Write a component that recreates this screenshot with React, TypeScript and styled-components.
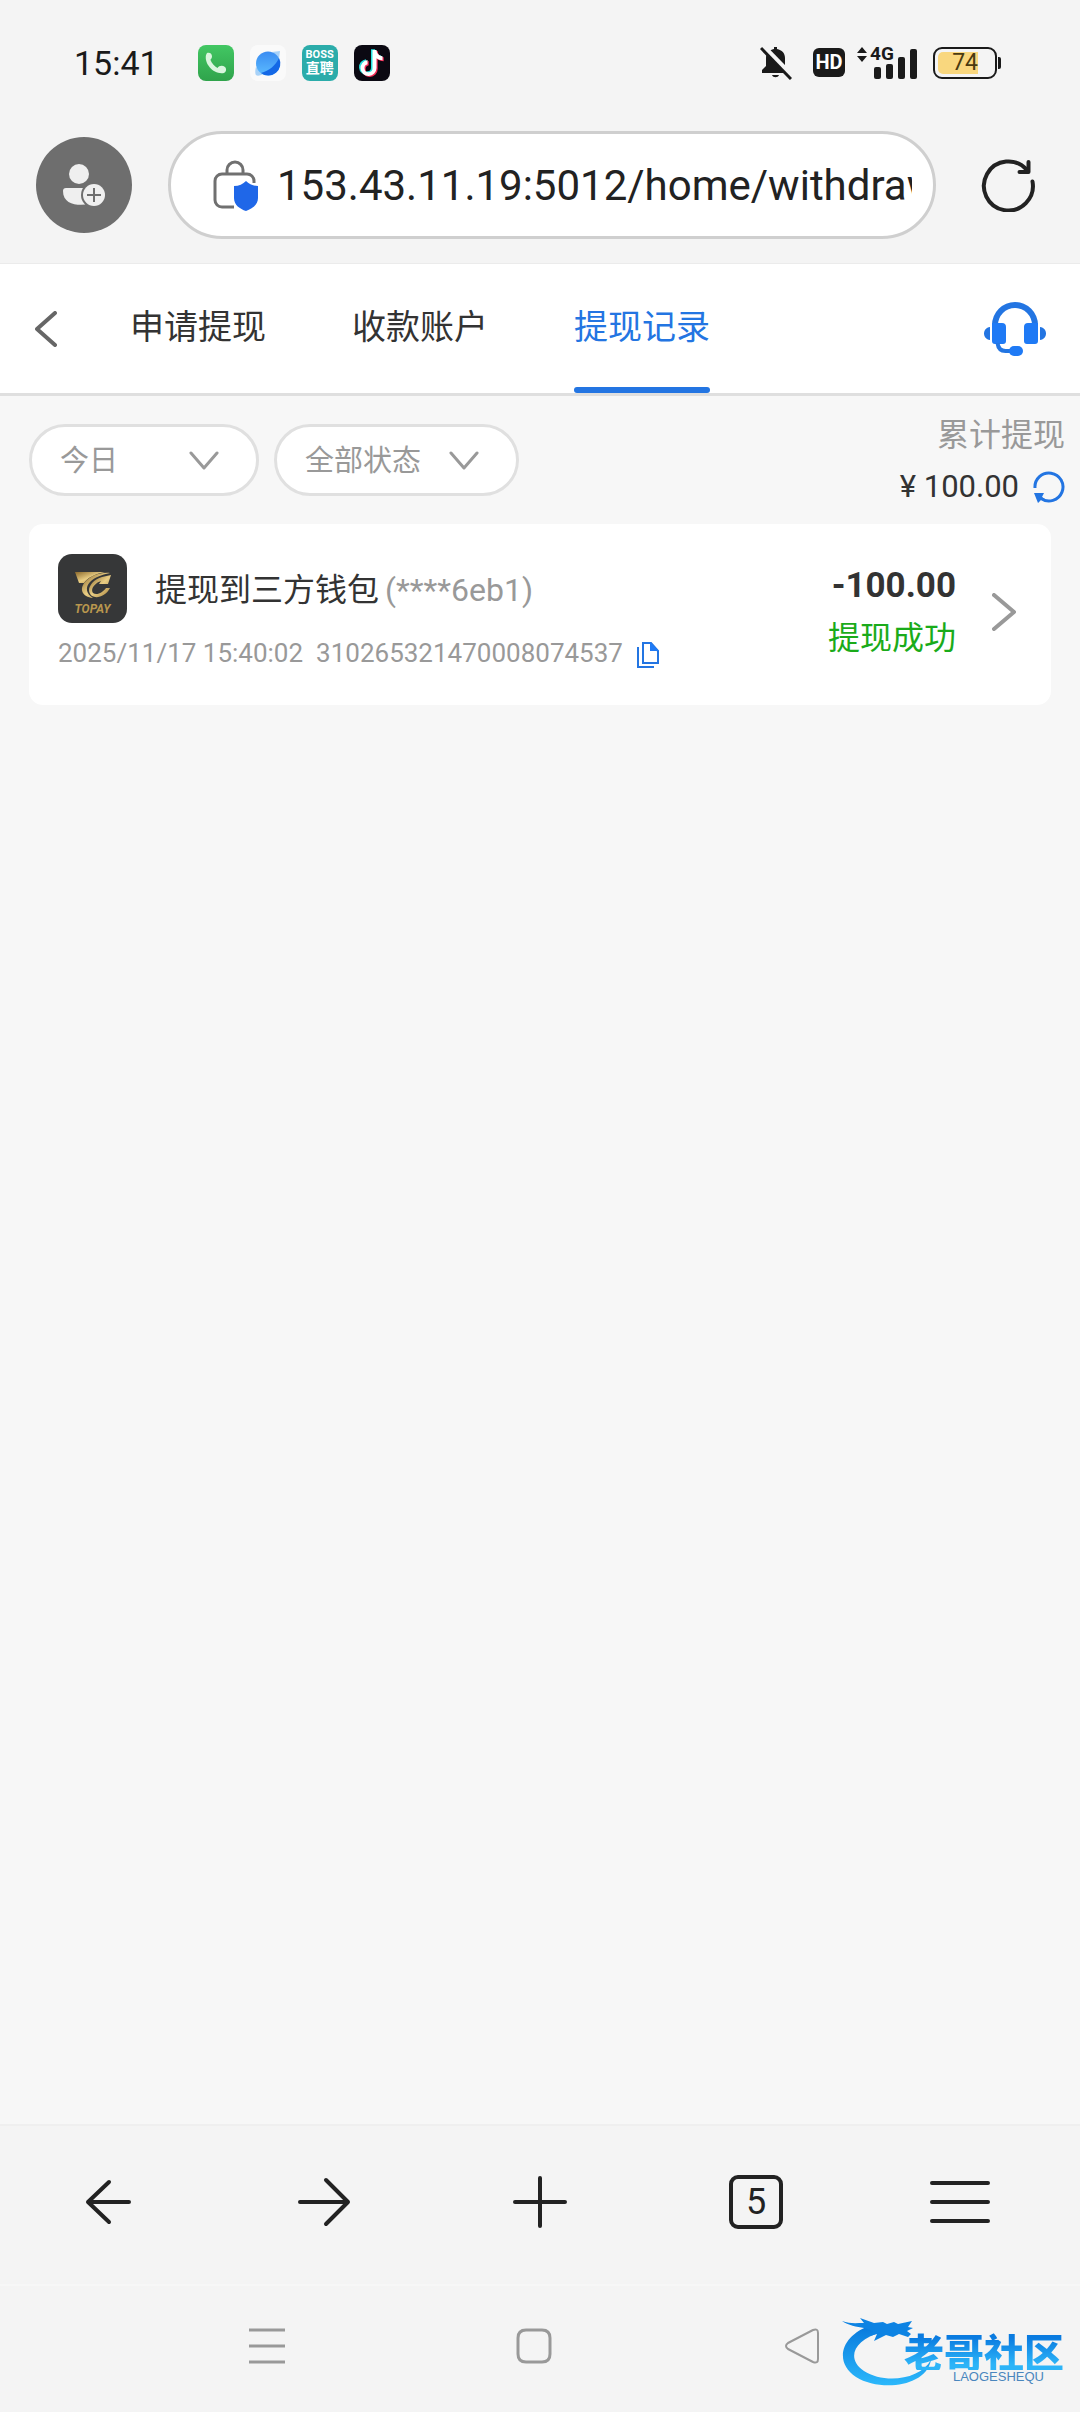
import React from 'react';
import styled, { createGlobalStyle } from 'styled-components';

const GlobalStyle = createGlobalStyle`
  * { box-sizing: border-box; }
  body { margin: 0; background: #f7f7f7; }
  body, button, input, select { font-family: Roboto, "Noto Sans CJK SC", sans-serif; }
  button { border: 0; padding: 0; background: none; color: inherit; cursor: pointer; }
  svg { display: block; flex: none; }
`;

const Screen = styled.div`
  display: flex;
  flex-direction: column;
  min-height: 100vh;
  color: #333;
`;

/* ---------- system status bar ---------- */
const StatusBar = styled.div`
  display: flex;
  align-items: center;
  justify-content: space-between;
  height: 125px;
  padding: 0 79px 0 74px;
  background: #f4f4f4;
  color: #1a1a1a;
`;
const StatusGroup = styled.div<{ $gap: number }>`
  display: flex;
  align-items: center;
  gap: ${(p) => p.$gap}px;
`;
const Clock = styled.span`
  margin-right: 23px;
  font-size: 34px;
  line-height: 40px;
`;
const BossIcon = styled.span`
  display: flex;
  flex-direction: column;
  align-items: center;
  justify-content: center;
  width: 36px;
  height: 36px;
  border-radius: 8px;
  background: #2bacaa;
  color: #fff;
  font-weight: 700;
  font-size: 14px;
  line-height: 15px;
`;
const BossWord = styled.span`
  font-size: 11px;
  line-height: 12px;
`;
const HdBadge = styled.span`
  width: 32px;
  margin-left: 9px;
  border-radius: 6px;
  background: #1a1a1a;
  color: #fff;
  font-size: 20px;
  font-weight: 700;
  line-height: 29px;
  text-align: center;
`;
const Signal = styled.span`
  position: relative;
  width: 60px;
  height: 34px;
`;
const NetType = styled.span`
  position: absolute;
  left: 13px;
  top: 0;
  font-size: 19px;
  font-weight: 700;
  line-height: 16px;
`;
const BatteryWrap = styled.span`
  display: flex;
  align-items: center;
  gap: 1px;
  margin-left: 4px;
`;
const Battery = styled.span`
  width: 64px;
  height: 32px;
  padding: 3px;
  border: 2px solid #1a1a1a;
  border-radius: 9px;
`;
const BatteryLevel = styled.span`
  display: block;
  width: 40px;
  border-radius: 5px 0 0 5px;
  background: #f9d77e;
  color: #4a3a10;
  font-size: 23px;
  line-height: 22px;
  text-align: right;
`;
const BatteryTip = styled.span`
  width: 3px;
  height: 12px;
  border-radius: 0 2px 2px 0;
  background: #1a1a1a;
`;

/* ---------- browser address bar ---------- */
const AddressRow = styled.header`
  display: flex;
  align-items: center;
  height: 139px;
  padding: 0 45px 18px 36px;
  border-bottom: 1px solid #ebebeb;
  background: #f4f4f4;
`;
const Avatar = styled.button`
  display: grid;
  place-items: center;
  width: 96px;
  height: 96px;
  border-radius: 50%;
  background: #6e6e6e;
`;
const AddressBox = styled.label`
  display: flex;
  flex: 1;
  align-items: center;
  gap: 18px;
  min-width: 0;
  height: 108px;
  margin: 0 45px 0 36px;
  padding: 2px 21px 0 42px;
  border: 3px solid #cfcfcf;
  border-radius: 54px;
  background: #fff;
`;
const AddressInput = styled.input`
  flex: 1;
  min-width: 0;
  padding: 0;
  border: 0;
  outline: 0;
  background: none;
  color: #222;
  font-size: 42px;
  line-height: 50px;
`;

/* ---------- page header ---------- */
const PageHeader = styled.nav`
  display: flex;
  align-items: center;
  height: 132px;
  padding: 0 34px 0 35px;
  border-bottom: 3px solid #dfdfdf;
  background: #fff;
`;
const Tabs = styled.div`
  display: flex;
  flex: 1;
  gap: 86px;
  height: 100%;
  padding-left: 73px;
`;
const Tab = styled.button<{ $active?: boolean }>`
  position: relative;
  height: 100%;
  padding-bottom: 4px;
  color: ${(p) => (p.$active ? '#2375e2' : '#333')};
  font-size: 34px;
  line-height: 50px;

  &::after {
    content: "";
    position: absolute;
    left: 0;
    right: 0;
    bottom: 0;
    height: 6px;
    border-radius: 3px;
    background: ${(p) => (p.$active ? '#2375e2' : 'transparent')};
  }
`;

/* ---------- filters and total ---------- */
const Content = styled.main`
  flex: 1;
  background: #f7f7f7;
`;
const FilterRow = styled.div`
  display: flex;
  align-items: center;
  gap: 15px;
  height: 128px;
  padding: 0 15px 0 29px;
`;
const Picker = styled.span<{ $width: number }>`
  position: relative;
  width: ${(p) => p.$width}px;
  svg {
    position: absolute;
    right: 40px;
    top: 27px;
    pointer-events: none;
  }
`;
const PickerSelect = styled.select`
  appearance: none;
  display: block;
  width: 100%;
  height: 72px;
  padding: 2px 28px 0;
  border: 3px solid #e0e0e0;
  border-radius: 36px;
  background: #fff;
  color: #999;
  font-size: 29px;
`;
const Total = styled.div`
  display: flex;
  flex-direction: column;
  align-items: flex-end;
  margin-left: auto;
  padding-top: 2px;
  color: #999;
  font-size: 32px;
  line-height: 52px;
`;
const TotalValue = styled.span`
  display: flex;
  align-items: center;
  gap: 14px;
  color: #333;
  font-size: 31px;
`;

/* ---------- record card ---------- */
const Card = styled.article`
  display: flex;
  align-items: center;
  margin: 0 29px;
  padding: 30px 35px 35px 29px;
  border-radius: 14px;
  background: #fff;
`;
const Details = styled.div`
  display: flex;
  flex: 1;
  flex-direction: column;
  gap: 13px;
`;
const TitleRow = styled.div`
  display: flex;
  align-items: center;
  height: 69px;
  color: #333;
  font-size: 32px;
  line-height: 40px;
`;
const TitleText = styled.span`
  padding-top: 3px;
`;
const WalletLogo = styled.span`
  display: flex;
  flex-direction: column;
  align-items: center;
  gap: 4px;
  width: 69px;
  height: 69px;
  margin-right: 28px;
  padding-top: 18px;
  border-radius: 14px;
  background: #363738;
  color: #b8964e;
  font-size: 12px;
  font-style: italic;
  font-weight: 700;
  line-height: 14px;
`;
const Muted = styled.span`
  margin-left: 6px;
  color: #999;
`;
const MetaRow = styled.div`
  display: flex;
  align-items: center;
  gap: 13px;
  color: #999;
  font-size: 26px;
  line-height: 34px;
`;
const CopyButton = styled.button`
  padding-top: 3px;
`;
const Result = styled.div`
  display: flex;
  flex-direction: column;
  align-items: flex-end;
  margin-right: 36px;
  color: #1aab1a;
  font-size: 32px;
  line-height: 52px;
`;
const Amount = styled.strong`
  color: #333;
  font-size: 35px;
  font-weight: 700;
`;

/* ---------- bottom bars ---------- */
const Toolbar = styled.footer`
  display: grid;
  grid-template-columns: repeat(5, 1fr);
  height: 160px;
  padding-bottom: 6px;
  border-top: 2px solid #efefef;
  background: #f4f4f4;
`;
const ToolButton = styled.button<{ $inset?: number }>`
  display: grid;
  place-items: center;
  padding-right: ${(p) => p.$inset ?? 0}px;
`;
const TabCount = styled.span`
  width: 54px;
  height: 54px;
  border: 4px solid #222;
  border-radius: 9px;
  color: #222;
  font-size: 36px;
  line-height: 46px;
`;
const SystemNav = styled.div`
  position: relative;
  display: grid;
  grid-template-columns: repeat(3, 1fr);
  height: 128px;
  padding: 0 144px 6px 133px;
  border-top: 2px solid #f7f7f7;
  background: #f4f4f4;
`;
const Watermark = styled.div`
  position: absolute;
  right: 16px;
  top: 32px;
  display: flex;
  width: 222px;
  flex-direction: column;
  align-items: flex-end;
  padding-top: 14px;
  svg {
    position: absolute;
    left: 0;
    top: 0;
  }
`;
const WatermarkTitle = styled.span`
  position: relative;
  background: linear-gradient(#0a7be0 15%, #2cb4f8 85%);
  background-clip: text;
  -webkit-background-clip: text;
  color: transparent;
  font-family: "Noto Sans CJK SC", sans-serif;
  font-size: 40px;
  font-weight: 900;
  line-height: 38px;
`;
const WatermarkSub = styled.span`
  position: relative;
  margin-right: 20px;
  color: #4a86bd;
  font-family: "Liberation Sans", sans-serif;
  font-size: 13px;
  line-height: 14px;
`;

const PhoneIcon = () => (
  <svg width="36" height="36" viewBox="0 0 36 36">
    <defs>
      <linearGradient id="phone" x2="0" y2="1">
        <stop stopColor="#42c763" />
        <stop offset="1" stopColor="#2fa34b" />
      </linearGradient>
    </defs>
    <rect width="36" height="36" rx="8" fill="url(#phone)" />
    <path d="M9 8c3-1 5 1 5 3.500 0 2-1.500 2.500-1.500 3.500 1 3 4 6.500 7 8 1.500-2.500 5-3 7.500-1 2 2 1 5-1 6C16 30 6 19 8 10z" fill="#d9f5de" />
  </svg>
);

const PlanetIcon = () => (
  <svg width="36" height="36" viewBox="0 0 36 36">
    <defs>
      <linearGradient id="planet" x2="0" y2="1">
        <stop stopColor="#3a8cf2" />
        <stop offset="1" stopColor="#5cbcff" />
      </linearGradient>
    </defs>
    <rect width="36" height="36" rx="8" fill="#fafafa" />
    <path d="M22 7l8-1-1 8zM6 22l7 7c-3 2-6 2-7 1s-1-5 0-8z" fill="#a8d2f8" />
    <circle cx="18" cy="18.500" r="12" fill="url(#planet)" />
    <path d="M29 13a12 12 0 0 1-18 15c8-2 15-8 18-15z" fill="#1468e6" />
  </svg>
);

const TikTokIcon = () => {
  const note = 'M18.500 5h4c.5 4 3 6 6 6.300v4c-2.500 0-4.500-.8-6-2V23a8 8 0 1 1-9-8v4.300a4 4 0 1 0 5 3.700z';
  return (
    <svg width="36" height="36" viewBox="0 0 36 36">
      <rect width="36" height="36" rx="8" fill="#0b0912" />
      <path d={note} fill="#29e0df" transform="translate(-1.500 -.8)" />
      <path d={note} fill="#f62d58" transform="translate(1.200 1)" />
      <path d={note} fill="#fff" />
    </svg>
  );
};

const MutedBellIcon = () => (
  <svg width="32" height="34" viewBox="0 0 32 34">
    <path d="M14 1h3v2c5 1 8 4 8 9v8l4 5v2H2v-3l4-4v-8c0-5 3-8 8-9zM12 29h7c-1 3-6 3-7 0z" fill="#1a1a1a" />
    <path d="M3 0l30 31" stroke="#f4f4f4" strokeWidth="5" />
    <path d="M1 2l30 31" stroke="#1a1a1a" strokeWidth="3" />
  </svg>
);

const SignalBars = () => (
  <svg width="60" height="34" viewBox="0 0 60 34">
    <path d="M0 7l5-6 5 6zM0 10l5 6 5-6z" fill="#1a1a1a" />
    <g fill="#1a1a1a">
      <rect x="17" y="21" width="7" height="12" rx="2" />
      <rect x="29" y="18" width="7" height="15" rx="2" />
      <rect x="41" y="11" width="7" height="22" rx="2" />
      <rect x="53" y="3" width="7" height="30" rx="2" />
    </g>
  </svg>
);

const AddUserIcon = () => (
  <svg width="42" height="44" viewBox="0 0 42 44">
    <g fill="#efefef">
      <circle cx="16" cy="11" r="10" />
      <path d="M3 25h24v16c-12 2-27 1-27-13a3 3 0 0 1 3-3z" />
    </g>
    <circle cx="31" cy="32" r="13" fill="#6e6e6e" />
    <circle cx="31" cy="32" r="11" fill="#efefef" />
    <path d="M31 25v14M24 32h14" stroke="#6e6e6e" strokeWidth="2" />
  </svg>
);

const SecureIcon = () => (
  <svg width="46" height="52" viewBox="0 0 46 52">
    <g fill="none" stroke="#707070" strokeWidth="3">
      <path d="M14 14V10a8 8 0 0 1 16 0v4" />
      <path d="M21 47H9a7 7 0 0 1-7-7V21a7 7 0 0 1 7-7h25a7 7 0 0 1 7 7v2" />
    </g>
    <path d="M33 21c3 3 7 5 12 5v12c0 7-6 11-12 13-6-2-12-6-12-13V26c5 0 9-2 12-5z" fill="#1f67e8" />
  </svg>
);

const ReloadIcon = () => (
  <svg width="54" height="54" viewBox="0 0 54 54" fill="none" stroke="#222" strokeWidth="4" strokeLinecap="round" strokeLinejoin="round">
    <path d="M51.500 23.500A24.500 24.500 0 1 1 46 12" />
    <path d="M47.500 4v10h-9" />
  </svg>
);

const HeadsetIcon = () => (
  <svg width="62" height="56" viewBox="0 0 62 56" fill="#1f7af5">
    <path d="M8 24a23 23 0 0 1 46 0h-6a17 17 0 0 0-34 0z" fill="#2375e2" />
    <path d="M8 22h10q4 0 4 4v14q0 3-3 3h-8q-3 0-3-3zM54 22H44q-4 0-4 4v14q0 3 3 3h8q3 0 3-3z" />
    <path d="M6 26v13C-2 38-2 27 6 26zM56 26v13c8-1 8-12 0-13z" fill="#2375e2" />
    <path d="M13.500 42q1 8 8 8h6" fill="none" stroke="#2375e2" strokeWidth="4" />
    <rect x="25" y="45" width="14" height="10" rx="5" />
  </svg>
);

const Chevron = ({ dir, w, h, color, stroke = 3 }: { dir: 'left' | 'right' | 'down'; w: number; h: number; color: string; stroke?: number }) => {
  const d = {
    left: `M${w - 2} 2L2 ${h / 2}L${w - 2} ${h - 2}`,
    right: `M2 2L${w - 2} ${h / 2}L2 ${h - 2}`,
    down: `M2 2L${w / 2} ${h - 2}L${w - 2} 2`,
  }[dir];
  return (
    <svg width={w} height={h} fill="none" stroke={color} strokeWidth={stroke} strokeLinecap="round" strokeLinejoin="round">
      <path d={d} />
    </svg>
  );
};

const RefreshIcon = () => (
  <svg width="32" height="34" viewBox="0 0 32 34">
    <path d="M2 18A14 14 0 1 1 8 28.500" fill="none" stroke="#2375e2" strokeWidth="3" />
    <path d="M1 23h10l-2 4 3 2-4 1-3 3z" fill="#2375e2" />
  </svg>
);

const WalletMark = () => (
  <svg width="36" height="26" viewBox="0 0 36 26">
    <defs>
      <linearGradient id="gold" x2="1" y2="1">
        <stop stopColor="#8a682b" />
        <stop offset=".5" stopColor="#e9cd83" />
        <stop offset="1" stopColor="#a8833d" />
      </linearGradient>
    </defs>
    <g fill="url(#gold)">
      <path d="M0 0H30C20 2 12 6 9 11H4z" />
      <path d="M10 10C4 17 7 25 18 26C11 22 10 15 15 10C20 5 26 3 35 1C25 0 15 4 10 10z" />
      <path d="M36 3L33 12H24L26 9C20 11 15 17 18 21C22 24 28 20 31 16H35C31 24 22 27 17 24C10 19 16 8 27 5z" />
    </g>
  </svg>
);

const CopyIcon = () => (
  <svg width="24" height="28" viewBox="0 0 24 28" fill="none" stroke="#2375e2" strokeWidth="2">
    <path d="M7 2h8l7 8v12H7z" />
    <path d="M14 1l9 9h-9z" fill="#1f7af5" stroke="none" />
    <path d="M2 6v20H18" />
  </svg>
);

const LineIcon = ({ w, h, d, stroke = 4, color = '#222' }: { w: number; h: number; d: string; stroke?: number; color?: string }) => (
  <svg width={w} height={h} viewBox={`0 0 ${w} ${h}`} fill="none" stroke={color} strokeWidth={stroke} strokeLinecap="round" strokeLinejoin="round">
    <path d={d} />
  </svg>
);

const DragonMark = () => (
  <svg width="90" height="72" viewBox="0 0 90 72">
    <defs>
      <linearGradient id="dragon" x2="0" y2="1">
        <stop stopColor="#0878dc" />
        <stop offset="1" stopColor="#2bb8fb" />
      </linearGradient>
    </defs>
    <path d="M30 7C-2 17-8 45 14 59 38 74 84 69 89 42 78 62 42 66 22 53 4 41 11 22 40 14z" fill="url(#dragon)" />
    <path d="M0 3c8 3 14 2 22 2L18 0l14 5 9-1 4 2 7-2 4 2 14-3-4 6 5 1-6 3 4 3-3 3-9-3-6 3-7-2-12 6 3-7-7 2 3-5-9-3C15 9 6 7 0 3z" fill="#0d83e3" />
  </svg>
);

export default function App() {
  return (
    <Screen>
      <GlobalStyle />
      <StatusBar>
        <StatusGroup $gap={16}>
          <Clock>15:41</Clock>
          <PhoneIcon />
          <PlanetIcon />
          <BossIcon>
            <BossWord>BOSS</BossWord>
            直聘
          </BossIcon>
          <TikTokIcon />
        </StatusGroup>
        <StatusGroup $gap={12}>
          <MutedBellIcon />
          <HdBadge>HD</HdBadge>
          <Signal>
            <SignalBars />
            <NetType>4G</NetType>
          </Signal>
          <BatteryWrap>
            <Battery>
              <BatteryLevel>74</BatteryLevel>
            </Battery>
            <BatteryTip />
          </BatteryWrap>
        </StatusGroup>
      </StatusBar>

      <AddressRow>
        <Avatar aria-label="账户">
          <AddUserIcon />
        </Avatar>
        <AddressBox>
          <SecureIcon />
          <AddressInput aria-label="网址" defaultValue="153.43.11.19:5012/home/withdraw" />
        </AddressBox>
        <button aria-label="刷新">
          <ReloadIcon />
        </button>
      </AddressRow>

      <PageHeader>
        <button aria-label="返回">
          <Chevron dir="left" w={22} h={36} color="#666" stroke={4} />
        </button>
        <Tabs>
          <Tab>申请提现</Tab>
          <Tab>收款账户</Tab>
          <Tab $active>提现记录</Tab>
        </Tabs>
        <button aria-label="客服">
          <HeadsetIcon />
        </button>
      </PageHeader>

      <Content>
        <FilterRow>
          <Picker $width={230}>
            <PickerSelect aria-label="日期">
              <option>今日</option>
            </PickerSelect>
            <Chevron dir="down" w={30} h={19} color="#999" />
          </Picker>
          <Picker $width={245}>
            <PickerSelect aria-label="状态">
              <option>全部状态</option>
            </PickerSelect>
            <Chevron dir="down" w={30} h={19} color="#999" />
          </Picker>
          <Total>
            累计提现
            <TotalValue>
              ¥ 100.00
              <button aria-label="更新金额">
                <RefreshIcon />
              </button>
            </TotalValue>
          </Total>
        </FilterRow>

        <Card>
          <Details>
            <TitleRow>
              <WalletLogo>
                <WalletMark />
                TOPAY
              </WalletLogo>
              <TitleText>
                提现到三方钱包
                <Muted>(****6eb1)</Muted>
              </TitleText>
            </TitleRow>
            <MetaRow>
              <span>2025/11/17 15:40:02</span>
              <span>310265321470008074537</span>
              <CopyButton aria-label="复制">
                <CopyIcon />
              </CopyButton>
            </MetaRow>
          </Details>
          <Result>
            <Amount>-100.00</Amount>
            提现成功
          </Result>
          <button aria-label="详情">
            <Chevron dir="right" w={24} h={38} color="#999" stroke={4} />
          </button>
        </Card>
      </Content>

      <Toolbar>
        <ToolButton aria-label="后退">
          <LineIcon w={46} h={46} d="M44 23H3M24 3L3 23L24 43" />
        </ToolButton>
        <ToolButton aria-label="前进">
          <LineIcon w={54} h={50} d="M3 25H51M29 3L51 25L29 47" />
        </ToolButton>
        <ToolButton aria-label="新建">
          <LineIcon w={54} h={54} d="M27 3V51M2 27H52" />
        </ToolButton>
        <ToolButton aria-label="标签页">
          <TabCount>5</TabCount>
        </ToolButton>
        <ToolButton aria-label="菜单" $inset={24}>
          <LineIcon w={60} h={46} d="M2 4H58M2 23H58M2 42H58" />
        </ToolButton>
      </Toolbar>

      <SystemNav>
        <ToolButton aria-label="最近任务">
          <svg width="36" height="36" stroke="#999" strokeWidth="3">
            <path d="M0 2H36M0 18H36M0 34H36" />
          </svg>
        </ToolButton>
        <ToolButton aria-label="主页">
          <LineIcon w={36} h={36} stroke={3} color="#999" d="M10 2H26Q34 2 34 10V26Q34 34 26 34H10Q2 34 2 26V10Q2 2 10 2Z" />
        </ToolButton>
        <ToolButton aria-label="返回上级">
          <LineIcon w={36} h={36} stroke={2} color="#999" d="M29 2Q34 0 34 5V31Q34 36 29 34L4 21Q0 18 4 15Z" />
        </ToolButton>
        <Watermark>
          <DragonMark />
          <WatermarkTitle>老哥社区</WatermarkTitle>
          <WatermarkSub>LAOGESHEQU</WatermarkSub>
        </Watermark>
      </SystemNav>
    </Screen>
  );
}
